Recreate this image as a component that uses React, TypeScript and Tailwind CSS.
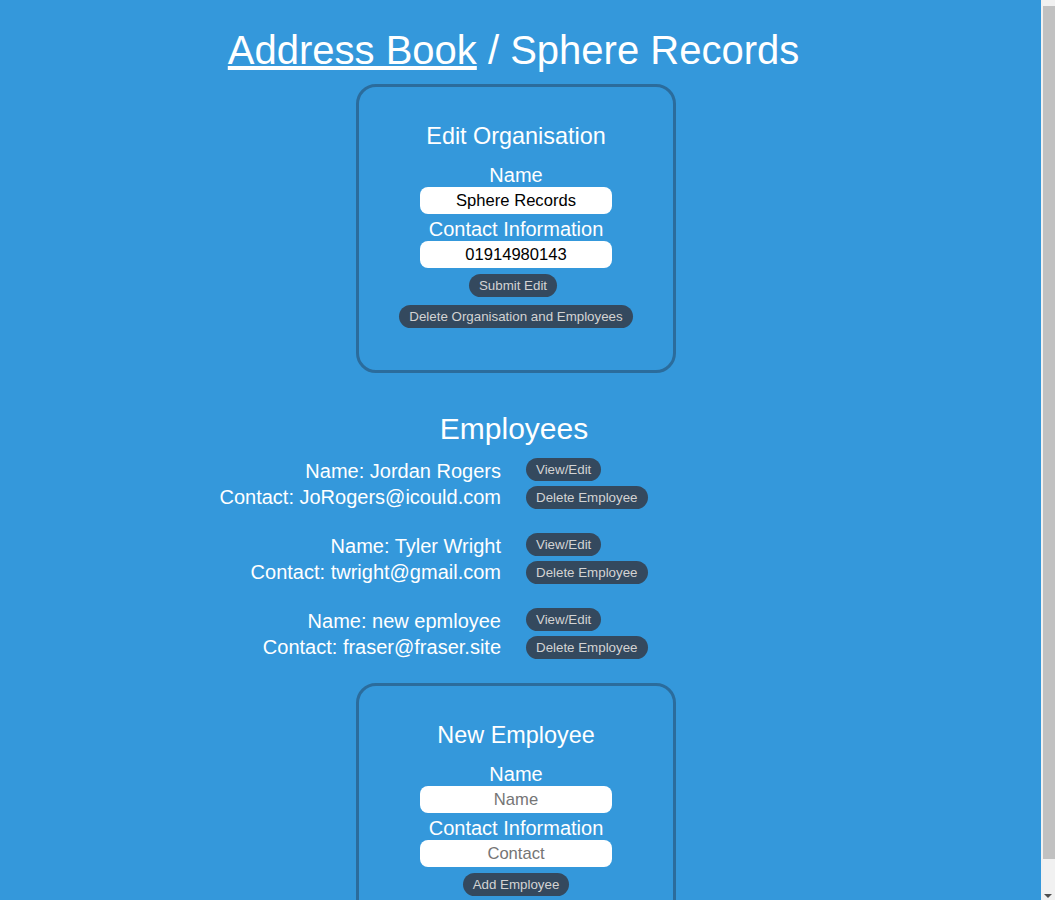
import React from "react";

const btn =
  "rounded-full bg-[#34495e] text-[#d3d3d3] text-[13.33px] leading-[15px] py-[4px] px-[10px] whitespace-nowrap";

const inputCls =
  "block w-[192px] h-[27px] rounded-[8px] bg-white text-black text-center text-[16.6px] leading-[19px] py-[4px] outline-none placeholder:text-[#757575]";

function FormBox({
  title,
  nameValue,
  contactValue,
  buttons,
}: {
  title: string;
  nameValue?: string;
  contactValue?: string;
  buttons: { label: string; extra?: string }[];
}) {
  return (
    <div className="w-[320px] shrink-0 border-[3px] border-[#2b6c9c] rounded-[20px] flex flex-col items-center pt-[36px] pb-[42px]">
      <h3 className="text-[23.4px] leading-[27px]">{title}</h3>
      <label className="mt-[14px] text-[20px] leading-[23px]">Name</label>
      <input
        className={inputCls}
        defaultValue={nameValue}
        placeholder={nameValue ? undefined : "Name"}
      />
      <label className="mt-[4px] text-[20px] leading-[23px]">Contact Information</label>
      <input
        className={inputCls}
        defaultValue={contactValue}
        placeholder={contactValue ? undefined : "Contact"}
      />
      {buttons.map((b, i) => (
        <button
          key={b.label}
          className={`${btn} ${i === 0 ? "mt-[6px]" : "mt-[8px]"} ${b.extra ?? ""}`}
        >
          {b.label}
        </button>
      ))}
    </div>
  );
}

const employees = [
  { name: "Jordan Rogers", contact: "JoRogers@icould.com" },
  { name: "Tyler Wright", contact: "twright@gmail.com" },
  { name: "new epmloyee", contact: "fraser@fraser.site" },
];

export default function App() {
  return (
    <div
      className="flex h-[900px] w-[1055px] overflow-hidden bg-[#3498db] text-white"
      style={{ fontFamily: '"Liberation Sans", Arial, sans-serif' }}
    >
      <div className="w-[1041px] h-[900px] overflow-hidden pr-[9px] flex flex-col items-center">
        <h1 className="mt-[27px] pr-[5px] text-[40px] leading-[46px] font-normal">
          <a className="underline" href="#">
            Address Book
          </a>{" "}
          / Sphere Records
        </h1>
        <div className="mt-[11px]">
          <FormBox
            title="Edit Organisation"
            nameValue="Sphere Records"
            contactValue="01914980143"
            buttons={[
              { label: "Submit Edit", extra: "mr-[6px]" },
              { label: "Delete Organisation and Employees" },
            ]}
          />
        </div>
        <h2 className="mt-[38px] pr-[4px] text-[30px] leading-[35px]">Employees</h2>
        <div className="mt-[12px] w-full flex flex-col gap-[23px]">
          {employees.map((e) => (
            <div key={e.name} className="grid grid-cols-2 w-full">
              <div className="text-right pr-[15px] text-[20px] leading-[26px]">
                <div>Name: {e.name}</div>
                <div>Contact: {e.contact}</div>
              </div>
              <div className="pl-[10px] flex flex-col items-start gap-[5px]">
                <button className={btn}>View/Edit</button>
                <button className={btn}>Delete Employee</button>
              </div>
            </div>
          ))}
        </div>
        <div className="mt-[23px]">
          <FormBox title="New Employee" buttons={[{ label: "Add Employee" }]} />
        </div>
      </div>
      <div className="w-[14px] h-[900px] bg-[#f1f1f1] flex flex-col">
        <div className="mt-[6px] ml-[2px] w-[12px] h-[853px] bg-[#c1c1c1]" />
        <div className="flex-1 flex items-end justify-center pb-[1px]">
          <svg width="8" height="5" viewBox="0 0 8 5">
            <polygon points="0,0 8,0 4,4" fill="#505050" />
          </svg>
        </div>
      </div>
    </div>
  );
}
